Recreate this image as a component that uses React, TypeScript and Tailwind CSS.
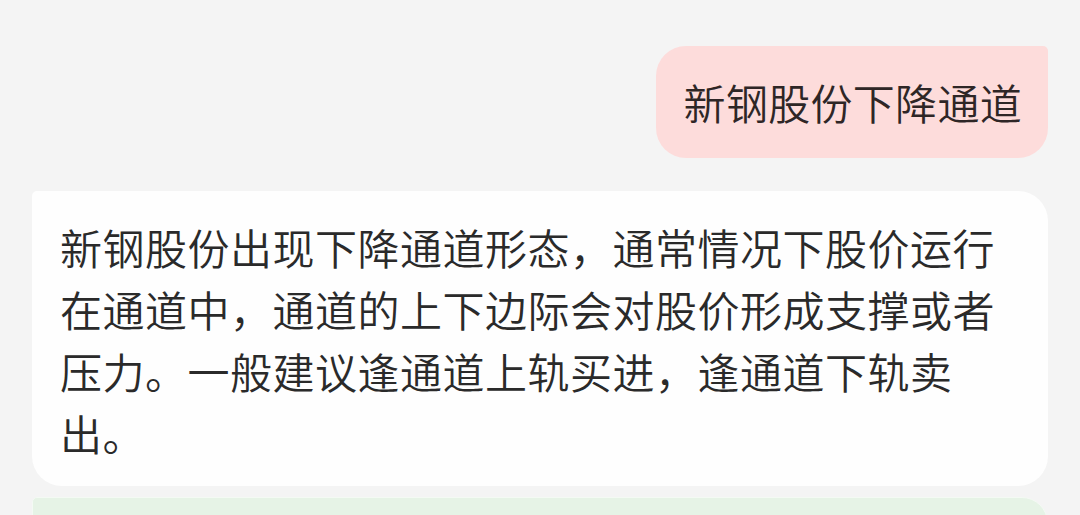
export default function App() {
  return (
    <div
      className="w-[1080px] h-[515px] overflow-hidden bg-[#f4f4f4] px-8 pt-[46px] flex flex-col"
      style={{ fontFamily: '"Noto Sans CJK SC", "Noto Sans", sans-serif' }}
    >
      <div className="flex justify-end">
        <div className="bg-[#fddcdb] text-[#2e2626] text-[42px] font-[350] tracking-[0.3px] leading-[62px] pl-7 pr-[26px] py-[25px] rounded-[30px] rounded-tr-[5px] whitespace-nowrap">
          新钢股份下降通道
        </div>
      </div>
      <div className="mt-[33px] bg-[#fefefe] text-[#2a2a2a] text-[42px] font-[350] tracking-[0.5px] leading-[62px] pl-7 pr-6 pt-[25px] pb-[22px] rounded-[30px] rounded-tl-[5px]">
        新钢股份出现下降通道形态，通常情况下股价运行在通道中，通道的上下边际会对股价形成支撑或者压力。一般建议逢通道上轨买进，逢通道下轨卖出。
      </div>
      <div className="mt-[11px] h-[80px] shrink-0 bg-[#e6f3e6] border border-[#f4faf4] rounded-[26px] rounded-tl-[5px]"></div>
    </div>
  );
}
